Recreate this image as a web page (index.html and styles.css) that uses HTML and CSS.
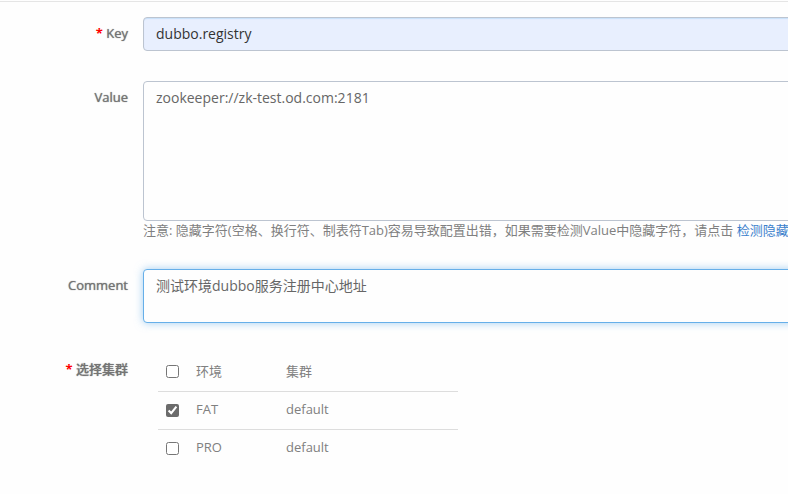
FILE: index.html
```html
<!DOCTYPE html>
<html lang="zh-CN">
<head>
<meta charset="utf-8">
<title>配置项</title>
<link rel="stylesheet" href="styles.css">
</head>
<body>
<main class="dialog">
<form class="form">
  <div class="row">
    <label class="label" for="key"><span class="required">*</span> Key</label>
    <input class="control key" id="key" type="text" value="dubbo.registry">
  </div>
  <div class="row">
    <label class="label" for="value">Value</label>
    <div class="field">
      <textarea class="control value" id="value" spellcheck="false">zookeeper://zk-test.od.com:2181</textarea>
      <p class="hint">注意: 隐藏字符(空格、换行符、制表符Tab)容易导致配置出错，如果需要检测Value中隐藏字符，请点击 <a href="#">检测隐藏</a></p>
    </div>
  </div>
  <div class="row">
    <label class="label" for="comment">Comment</label>
    <textarea class="control comment" id="comment" spellcheck="false">测试环境dubbo服务注册中心地址</textarea>
  </div>
  <div class="row">
    <span class="label" id="clusters"><span class="required">*</span> 选择集群</span>
    <table class="clusters" aria-labelledby="clusters">
      <thead>
        <tr><th class="pick"><input type="checkbox" aria-label="全选"></th><th class="env">环境</th><th>集群</th></tr>
      </thead>
      <tbody>
        <tr><td><input type="checkbox" aria-label="FAT" checked></td><td>FAT</td><td>default</td></tr>
        <tr><td><input type="checkbox" aria-label="PRO"></td><td>PRO</td><td>default</td></tr>
      </tbody>
    </table>
  </div>
</form>
</main>
</body>
</html>
```
FILE: styles.css
```css
* {
  box-sizing: border-box;
}

body {
  margin: 0;
  background: #fefefe;
  color: #808080;
  font: 13px/20px "Open Sans", "Noto Sans CJK SC", sans-serif;
}

.dialog {
  margin-top: 1px;
  border-top: 1px solid #e5e5e5;
  overflow: hidden;
}

.form {
  display: flex;
  flex-direction: column;
  gap: 30px;
  margin-right: -16px;
  padding: 15px 0 24px;
}

.row {
  display: grid;
  grid-template-columns: 128px minmax(0, 1fr);
  column-gap: 15px;
  align-items: start;
}

.label {
  padding-top: 6px;
  text-align: right;
  font-weight: 500;
  color: #747474;
  text-shadow: 0 0 1px #747474;
}

.required {
  color: #f00;
  font-weight: 700;
  text-shadow: none;
}

.control {
  display: block;
  width: 100%;
  margin: 0;
  padding: 6px 12px;
  border: 1px solid #bcc4d0;
  border-radius: 4px;
  background: #fefefe;
  color: #666;
  font: inherit;
  font-size: 14px;
  resize: none;
  outline: 0;
}

.key {
  height: 34px;
  padding: 5px 12px 7px;
  background: #e8effe;
  color: #333;
  box-shadow: inset 0 1px 1px #c8e0fa;
}

.value {
  height: 140px;
}

.comment {
  height: 54px;
  border-color: #66afe9;
  box-shadow: 0 0 8px rgba(102, 175, 233, 0.6);
}

.hint {
  margin: 0;
  line-height: 18px;
  white-space: nowrap;
}

.hint a {
  color: #3a80cc;
  text-decoration: none;
}

.clusters {
  width: 300px;
  margin-left: 15px;
  border-collapse: collapse;
  table-layout: fixed;
}

.clusters th,
.clusters td {
  height: 38px;
  padding: 0 8px 2px;
  text-align: left;
  font-weight: 400;
}

.clusters tbody tr {
  border-top: 1px solid #ddd;
}

.clusters .pick {
  width: 30px;
}

.clusters .env {
  width: 90px;
}

.clusters input {
  display: block;
  width: 13px;
  height: 13px;
  margin: 2px 0 0;
  accent-color: #6b6b6b;
}
```
